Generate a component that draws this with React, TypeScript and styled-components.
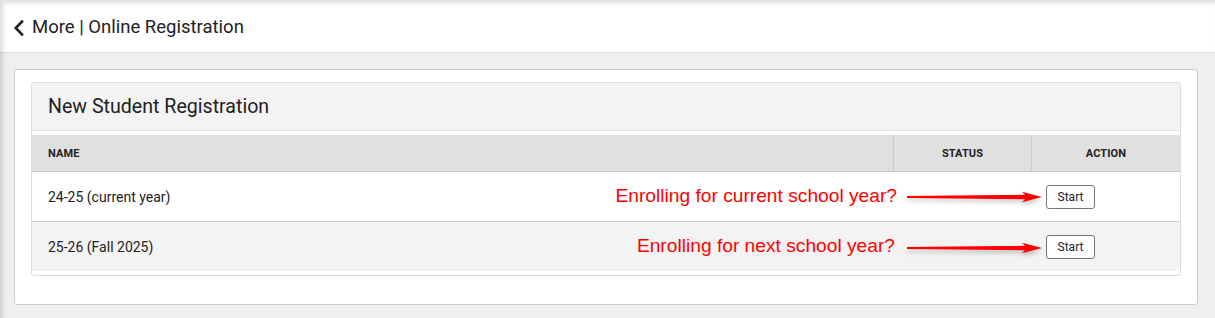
import React from "react";
import styled, { createGlobalStyle } from "styled-components";

const Global = createGlobalStyle`
  html, body { margin: 0; padding: 0; background: #efefef; }
  body { font-family: Roboto, "Noto Sans", sans-serif; color: #222; }
  * { box-sizing: border-box; }
`;

const Page = styled.div`
  position: relative;
  min-height: 318px;
  background: #efefef;
  &::after {
    content: "";
    position: absolute;
    inset: 0;
    pointer-events: none;
    box-shadow: inset 3px 3px 4px rgba(0, 0, 0, 0.13);
  }
`;

const Header = styled.header`
  height: 53px;
  background: #fff;
  border-bottom: 1px solid #dcdcdc;
  display: flex;
  align-items: center;
  padding: 3px 0 0 13px;
  gap: 7px;
`;

const Title = styled.h1`
  margin: 0;
  font-size: 18.5px;
  font-weight: 400;
  color: #222;
  line-height: 1;
`;

const Body = styled.main`
  padding: 16px 17px 14px 14px;
`;

const Card = styled.section`
  background: #fff;
  border: 1px solid #cdcdcd;
  border-radius: 3px;
  padding: 12px 16px 28px 16px;
`;

const Panel = styled.div`
  border: 1px solid #dedede;
  border-radius: 3px;
  padding-bottom: 4px;
  overflow: hidden;
`;

const PanelHeader = styled.div`
  height: 48px;
  background: #f3f3f3;
  border-bottom: 1px solid #e2e2e2;
  display: flex;
  align-items: center;
  padding: 1px 16px 1px;
  margin-bottom: 4px;
`;

const PanelTitle = styled.h2`
  margin: 0;
  font-size: 19.6px;
  font-weight: 400;
  color: #222;
`;

const Grid = `
  display: grid;
  grid-template-columns: 861px 138px 1fr;
`;

const HeadRow = styled.div`
  ${Grid}
  height: 37px;
  background: #e0e0e0;
  border-bottom: 1px solid #c9c9c9;
`;

const HeadCell = styled.div<{ $align?: string; $sep?: boolean }>`
  display: flex;
  align-items: center;
  justify-content: ${(p) => p.$align || "flex-start"};
  padding: 0 16px;
  font-size: 11px;
  font-weight: 700;
  color: #222;
  letter-spacing: 0.1px;
  border-left: ${(p) => (p.$sep ? "1px solid #cbcbcb" : "none")};
`;

const Row = styled.div<{ $alt?: boolean; $last?: boolean }>`
  ${Grid}
  position: relative;
  height: ${(p) => (p.$last ? "49px" : "50px")};
  background: ${(p) => (p.$alt ? "#f3f3f3" : "#fff")};
  border-bottom: ${(p) => (p.$last ? "none" : "1px solid #cbcbcb")};
`;

const Cell = styled.div`
  display: flex;
  align-items: center;
  padding: 0 16px;
  font-size: 14px;
  color: #222;
`;

const ActionCell = styled(Cell)`
  padding-left: 15px;
`;

const StartButton = styled.button`
  width: 49px;
  height: 24px;
  border: 1px solid #767676;
  border-radius: 3px;
  background: #fff;
  font-family: Roboto, "Noto Sans", sans-serif;
  font-size: 12px;
  color: #222;
  padding: 0;
  cursor: pointer;
`;

const Annotation = styled.div`
  position: absolute;
  top: 0;
  bottom: 0;
  right: 138px;
  display: flex;
  align-items: center;
  gap: 10px;
  pointer-events: none;
`;

const AnnotationText = styled.span`
  font-family: "Liberation Sans", Arial, sans-serif;
  font-size: 19.2px;
  color: #ff0000;
  white-space: nowrap;
  margin-top: -2px;
`;

const ArrowSvg = styled.svg`
  display: block;
  filter: drop-shadow(0 3px 2px rgba(0, 0, 0, 0.22));
`;

const Chevron = () => (
  <svg width="12" height="16" viewBox="0 0 12 16" aria-hidden>
    <path d="M9 1.5 L2.8 8 L9 14.5" fill="none" stroke="#222" strokeWidth="2.6" strokeLinecap="square" />
  </svg>
);

const Arrow = ({ dy }: { dy: number }) => (
  <ArrowSvg width="135" height="14" viewBox="0 0 135 14" aria-hidden style={{ marginTop: dy }}>
    <polygon points="0,6 118,4.8 115,1.8 135,7 115,12.2 118,9.2 0,8" fill="#ff0000" />
  </ArrowSvg>
);

const rows = [
  { name: "24-25 (current year)", note: "Enrolling for current school year?", gap: 10, dy: 1 },
  { name: "25-26 (Fall 2025)", note: "Enrolling for next school year?", gap: 12, dy: 3 },
];

export default function App() {
  return (
    <>
      <Global />
      <Page>
        <Header>
          <Chevron />
          <Title>More | Online Registration</Title>
        </Header>
        <Body>
          <Card>
            <Panel>
              <PanelHeader>
                <PanelTitle>New Student Registration</PanelTitle>
              </PanelHeader>
              <HeadRow>
                <HeadCell>NAME</HeadCell>
                <HeadCell $align="center" $sep>STATUS</HeadCell>
                <HeadCell $align="center" $sep>ACTION</HeadCell>
              </HeadRow>
              {rows.map((r, i) => (
                <Row key={r.name} $alt={i % 2 === 1} $last={i === rows.length - 1}>
                  <Cell>{r.name}</Cell>
                  <Cell />
                  <ActionCell>
                    <StartButton>Start</StartButton>
                  </ActionCell>
                  <Annotation style={{ gap: r.gap }}>
                    <AnnotationText>{r.note}</AnnotationText>
                    <Arrow dy={r.dy} />
                  </Annotation>
                </Row>
              ))}
            </Panel>
          </Card>
        </Body>
      </Page>
    </>
  );
}
